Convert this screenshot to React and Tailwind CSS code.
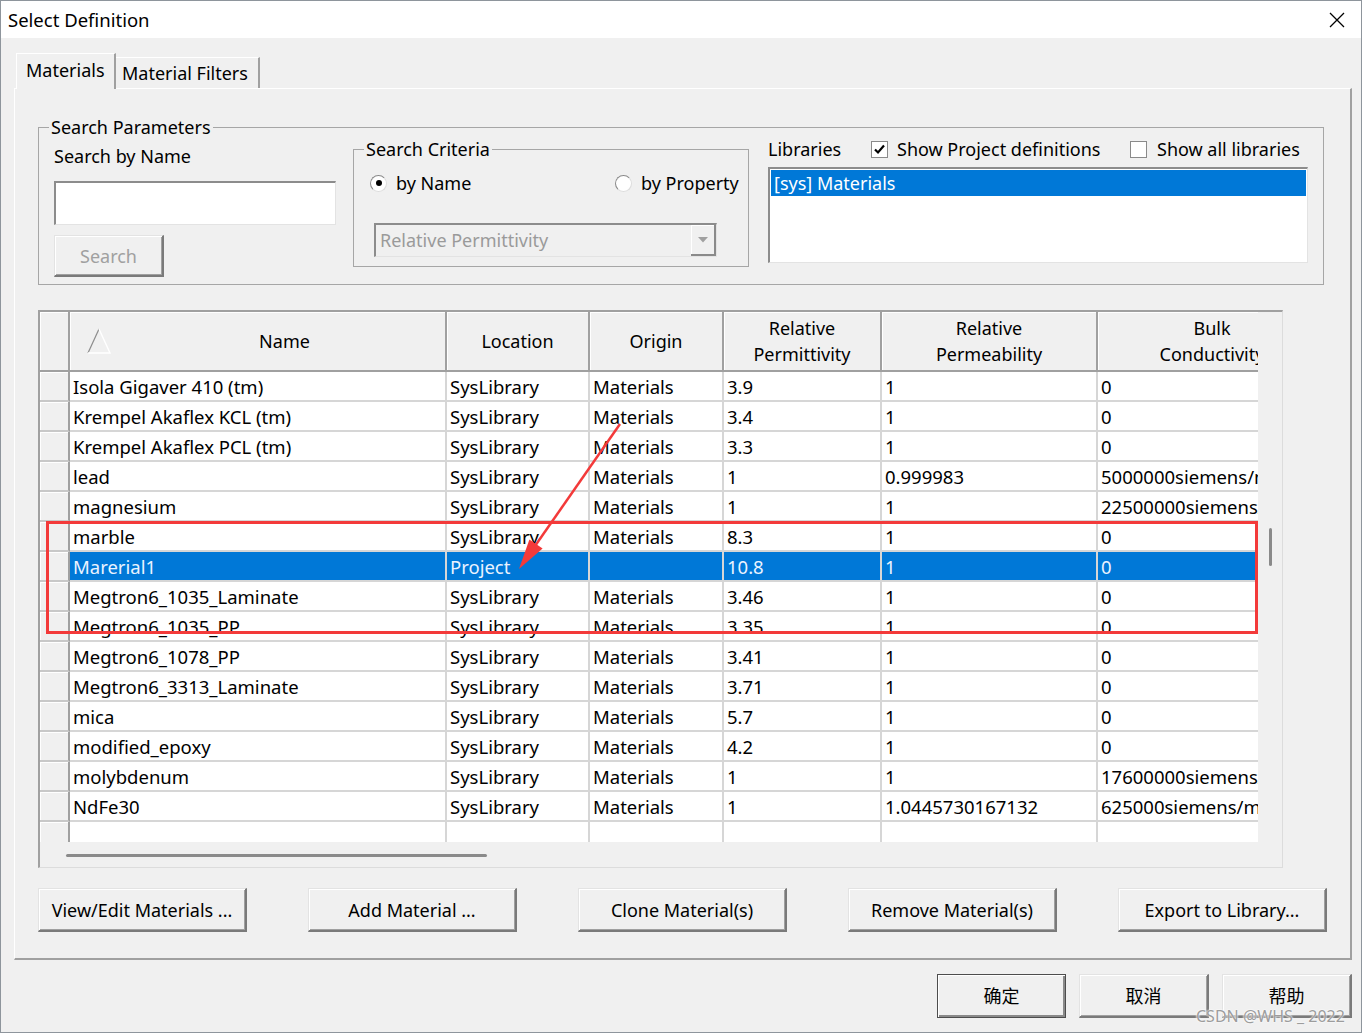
import React from "react";

const rows = [
  ["Isola Gigaver 410 (tm)", "SysLibrary", "Materials", "3.9", "1", "0"],
  ["Krempel Akaflex KCL (tm)", "SysLibrary", "Materials", "3.4", "1", "0"],
  ["Krempel Akaflex PCL (tm)", "SysLibrary", "Materials", "3.3", "1", "0"],
  ["lead", "SysLibrary", "Materials", "1", "0.999983", "5000000siemens/m"],
  ["magnesium", "SysLibrary", "Materials", "1", "1", "22500000siemens/m"],
  ["marble", "SysLibrary", "Materials", "8.3", "1", "0"],
  ["Marerial1", "Project", "", "10.8", "1", "0"],
  ["Megtron6_1035_Laminate", "SysLibrary", "Materials", "3.46", "1", "0"],
  ["Megtron6_1035_PP", "SysLibrary", "Materials", "3.35", "1", "0"],
  ["Megtron6_1078_PP", "SysLibrary", "Materials", "3.41", "1", "0"],
  ["Megtron6_3313_Laminate", "SysLibrary", "Materials", "3.71", "1", "0"],
  ["mica", "SysLibrary", "Materials", "5.7", "1", "0"],
  ["modified_epoxy", "SysLibrary", "Materials", "4.2", "1", "0"],
  ["molybdenum", "SysLibrary", "Materials", "1", "1", "17600000siemens/m"],
  ["NdFe30", "SysLibrary", "Materials", "1", "1.0445730167132", "625000siemens/m"],
  ["", "", "", "", "", ""],
];

const colW = ["w-[377px]", "w-[143px]", "w-[134px]", "w-[158px]", "w-[216px]", "w-[230px]"];

const raised =
  "bg-[#f0f0f0] border-t border-l border-t-[#e3e3e3] border-l-[#e3e3e3] border-r-2 border-b-2 border-r-[#7a7a7a] border-b-[#7a7a7a] shadow-[inset_1px_1px_0_#ffffff,inset_-1px_-1px_0_#a0a0a0]";
const sunken =
  "border-t-2 border-l-2 border-t-[#8c8c8c] border-l-[#8c8c8c] border-r border-b border-r-[#e3e3e3] border-b-[#e3e3e3]";

function Radio({ checked }) {
  return (
    <div className="w-[17px] h-[17px] shrink-0 rounded-full bg-white border border-t-[#8a8a8a] border-l-[#8a8a8a] border-r-[#dcdcdc] border-b-[#dcdcdc] flex items-center justify-center">
      {checked && <div className="w-[6px] h-[6px] rounded-full bg-black" />}
    </div>
  );
}

function Checkbox({ checked }) {
  return (
    <div className="w-[17px] h-[17px] shrink-0 bg-white border border-[#8a8a8a] flex items-center justify-center">
      {checked && (
        <svg width="13" height="13" viewBox="0 0 13 13">
          <path d="M2 6.5 L5 9.5 L11 2.5" fill="none" stroke="#000" strokeWidth="2.2" />
        </svg>
      )}
    </div>
  );
}

function Button({ children, className = "", disabled }) {
  return (
    <div
      className={`${raised} flex items-center justify-center leading-[24px] ${
        disabled ? "text-[#a0a0a0]" : "text-black"
      } ${className}`}
    >
      {children}
    </div>
  );
}

function HeaderCell({ w, children, className = "" }) {
  return (
    <div
      className={`${w} shrink-0 h-full bg-[#f0f0f0] border-r-2 border-b-2 border-[#a0a0a0] shadow-[inset_1px_1px_0_#ffffff] flex items-center justify-center text-center leading-[26px] ${className}`}
    >
      {children}
    </div>
  );
}

function Row({ r, idx }) {
  const sel = idx === 6;
  return (
    <div className="flex h-[30px]">
      <div className="w-[30px] shrink-0 bg-[#f0f0f0] border-r-2 border-b-2 border-r-[#a0a0a0] border-b-[#c8c8c8] shadow-[inset_1px_1px_0_#ffffff]" />
      {r.map((c, i) => (
        <div
          key={i}
          className={`${colW[i]} shrink-0 border-r-2 border-b-2 border-[#d6d6d6] pl-[3px] pt-px leading-[27px] text-[18.5px] whitespace-nowrap overflow-hidden ${
            sel ? "bg-[#0078d7] text-[#eaf3ff]" : "bg-white"
          }`}
        >
          {c}
        </div>
      ))}
    </div>
  );
}

export default function App() {
  return (
    <div className="relative w-[1362px] h-[1033px] overflow-hidden bg-[#f0f0f0] border border-[#8e959c] font-['Noto_Sans','Noto_Sans_CJK_SC',sans-serif] text-[18px] text-black">
      {/* Title bar */}
      <div className="h-[37px] bg-white flex items-center justify-between pl-[7px] pr-[16px]">
        <span className="leading-[24px] text-[18.5px]">Select Definition</span>
        <svg width="16" height="16" viewBox="0 0 16 16">
          <path d="M1 1 L15 15 M15 1 L1 15" stroke="#000" strokeWidth="1.3" />
        </svg>
      </div>

      <div className="pl-[13px] pr-[9px] pt-[15px]">
        {/* Tabs */}
        <div className="relative z-10 flex items-end h-[36px] -mb-px ml-[2px]">
          <div className="w-[100px] h-[36px] bg-[#f0f0f0] border-l border-t border-white border-r-2 border-r-[#a0a0a0] pl-[9px] pt-[4px] leading-[24px]">
            Materials
          </div>
          <div className="w-[144px] h-[31px] mb-px bg-[#f0f0f0] border-t border-white border-r-2 border-r-[#a0a0a0] pl-[6px] pt-[3px] leading-[24px]">
            Material Filters
          </div>
        </div>

        {/* Panel */}
        <div className="w-[1338px] h-[872px] border-l border-t border-white border-r-2 border-b-2 border-r-[#a0a0a0] border-b-[#a0a0a0] pl-[23px] pt-[26px]">
          {/* Search Parameters */}
          <fieldset className="w-[1286px] border border-[#a6a6a6]">
            <legend className="ml-[10px] px-[2px] leading-[24px]">Search Parameters</legend>
            <div className="flex items-start pl-[15px] pb-[7px]">
              {/* Left column */}
              <div className="w-[282px] shrink-0 pt-[5px]">
                <div className="leading-[24px]">Search by Name</div>
                <div className={`mt-[13px] h-[44px] bg-white ${sunken}`} />
                <Button disabled className="mt-[10px] h-[42px] w-[110px]">
                  Search
                </Button>
              </div>

              {/* Search Criteria */}
              <fieldset className="ml-[17px] -mt-[2px] w-[396px] shrink-0 border border-[#a6a6a6]">
                <legend className="ml-[10px] px-[2px] leading-[24px]">Search Criteria</legend>
                <div className="pt-[10px] pb-[9px]">
                  <div className="flex items-center h-[24px] pl-[16px]">
                    <div className="w-[245px] shrink-0 flex items-center">
                      <Radio checked />
                      <span className="ml-[9px] leading-[24px]">by Name</span>
                    </div>
                    <Radio />
                    <span className="ml-[9px] leading-[24px] whitespace-nowrap">by Property</span>
                  </div>
                  <div className={`ml-[20px] mt-[28px] w-[343px] h-[34px] flex bg-[#f0f0f0] ${sunken}`}>
                    <div className="flex-1 pl-[4px] leading-[30px] text-[#9a9a9a] whitespace-nowrap overflow-hidden">
                      Relative Permittivity
                    </div>
                    <div className="w-[25px] h-full bg-[#f0f0f0] border-r-2 border-b-2 border-[#8a8a8a] shadow-[inset_1px_1px_0_#ffffff] flex items-center justify-center">
                      <svg width="10" height="6" viewBox="0 0 10 6">
                        <path d="M0 0 L10 0 L5 5.5 Z" fill="#a0a0a0" />
                      </svg>
                    </div>
                  </div>
                </div>
              </fieldset>

              {/* Libraries */}
              <div className="ml-[19px] -mt-[2px] w-[540px] shrink-0">
                <div className="flex items-center h-[24px]">
                  <div className="w-[103px] shrink-0 leading-[24px]">Libraries</div>
                  <div className="w-[259px] shrink-0 flex items-center">
                    <Checkbox checked />
                    <span className="ml-[9px] leading-[24px] whitespace-nowrap">Show Project definitions</span>
                  </div>
                  <Checkbox />
                  <span className="ml-[10px] leading-[24px] whitespace-nowrap">Show all libraries</span>
                </div>
                <div className={`mt-[6px] h-[96px] bg-white p-px ${sunken}`}>
                  <div className="h-[26px] bg-[#0078d7] text-white pl-[3px] leading-[26px]">[sys] Materials</div>
                </div>
              </div>
            </div>
          </fieldset>

          {/* Table */}
          <div className="mt-[25px] w-[1245px] h-[558px] border-t-2 border-l-2 border-t-[#a0a0a0] border-l-[#a0a0a0] border-r border-b border-r-[#dcdcdc] border-b-[#dcdcdc] flex flex-col">
            <div className="flex h-[530px]">
              <div className="w-[1218px] h-[530px] overflow-hidden bg-white">
                <div className="flex h-[60px]">
                  <HeaderCell w="w-[30px]" />
                  <HeaderCell w="w-[377px]" className="justify-start">
                    <svg className="ml-[17px] shrink-0" width="24" height="26" viewBox="0 0 24 26">
                      <line x1="12" y1="1" x2="1" y2="25" stroke="#8c8c8c" strokeWidth="1.2" />
                      <polyline points="1,25 23,25 12,1" fill="none" stroke="#ffffff" strokeWidth="1.4" />
                    </svg>
                    <span className="flex-1 text-center pl-[13px]">Name</span>
                  </HeaderCell>
                  <HeaderCell w="w-[143px]">Location</HeaderCell>
                  <HeaderCell w="w-[134px]">Origin</HeaderCell>
                  <HeaderCell w="w-[158px]">
                    Relative
                    <br />
                    Permittivity
                  </HeaderCell>
                  <HeaderCell w="w-[216px]">
                    Relative
                    <br />
                    Permeability
                  </HeaderCell>
                  <HeaderCell w="w-[230px]">
                    Bulk
                    <br />
                    Conductivity
                  </HeaderCell>
                </div>
                {rows.map((r, i) => (
                  <Row key={i} r={r} idx={i} />
                ))}
              </div>
              <div className="w-[24px] h-full bg-[#f0f0f0] pt-[216px] pl-[11px]">
                <div className="w-[3px] h-[38px] rounded-full bg-[#8a8a8a]" />
              </div>
            </div>
            <div className="h-[25px] bg-[#f0f0f0] pt-[12px] pl-[26px]">
              <div className="w-[421px] h-[3px] rounded-full bg-[#8a8a8a]" />
            </div>
          </div>

          {/* Action buttons */}
          <div className="mt-[20px] w-[1289px] flex justify-between">
            <Button className="w-[209px] h-[44px]">View/Edit Materials ...</Button>
            <Button className="w-[209px] h-[44px]">Add Material ...</Button>
            <Button className="w-[209px] h-[44px]">Clone Material(s)</Button>
            <Button className="w-[209px] h-[44px]">Remove Material(s)</Button>
            <Button className="w-[209px] h-[44px]">Export to Library...</Button>
          </div>
        </div>

        {/* Dialog buttons */}
        <div className="mt-[14px] flex justify-end gap-[13px]">
          <div className="w-[129px] h-[44px] bg-[#f0f0f0] border border-[#4d4d4d] shadow-[inset_1px_1px_0_#ffffff,inset_-2px_-2px_0_#8a8a8a] flex items-center justify-center leading-[24px]">
            确定
          </div>
          <Button className="w-[130px] h-[44px]">取消</Button>
          <Button className="w-[130px] h-[44px]">帮助</Button>
        </div>
      </div>

      {/* Watermark */}
      <div className="absolute left-[1195px] top-[1005px] text-[16px] leading-[20px] text-[#9c9c9c] whitespace-nowrap [text-shadow:0_0_2px_#ffffff,0_0_2px_#ffffff]">
        CSDN @WHS _ 2022
      </div>

      {/* Annotations */}
      <svg
        className="absolute -left-px -top-px pointer-events-none"
        width="1362"
        height="1033"
        viewBox="0 0 1362 1033"
      >
        <rect x="47.5" y="522.5" width="1209" height="110" fill="none" stroke="#f33a3a" strokeWidth="3" />
        <line x1="620" y1="424" x2="535" y2="546" stroke="#f33a3a" strokeWidth="2.5" />
        <polygon points="519,569 542.6,548.6 529.4,539.4" fill="#f33a3a" />
      </svg>
    </div>
  );
}
